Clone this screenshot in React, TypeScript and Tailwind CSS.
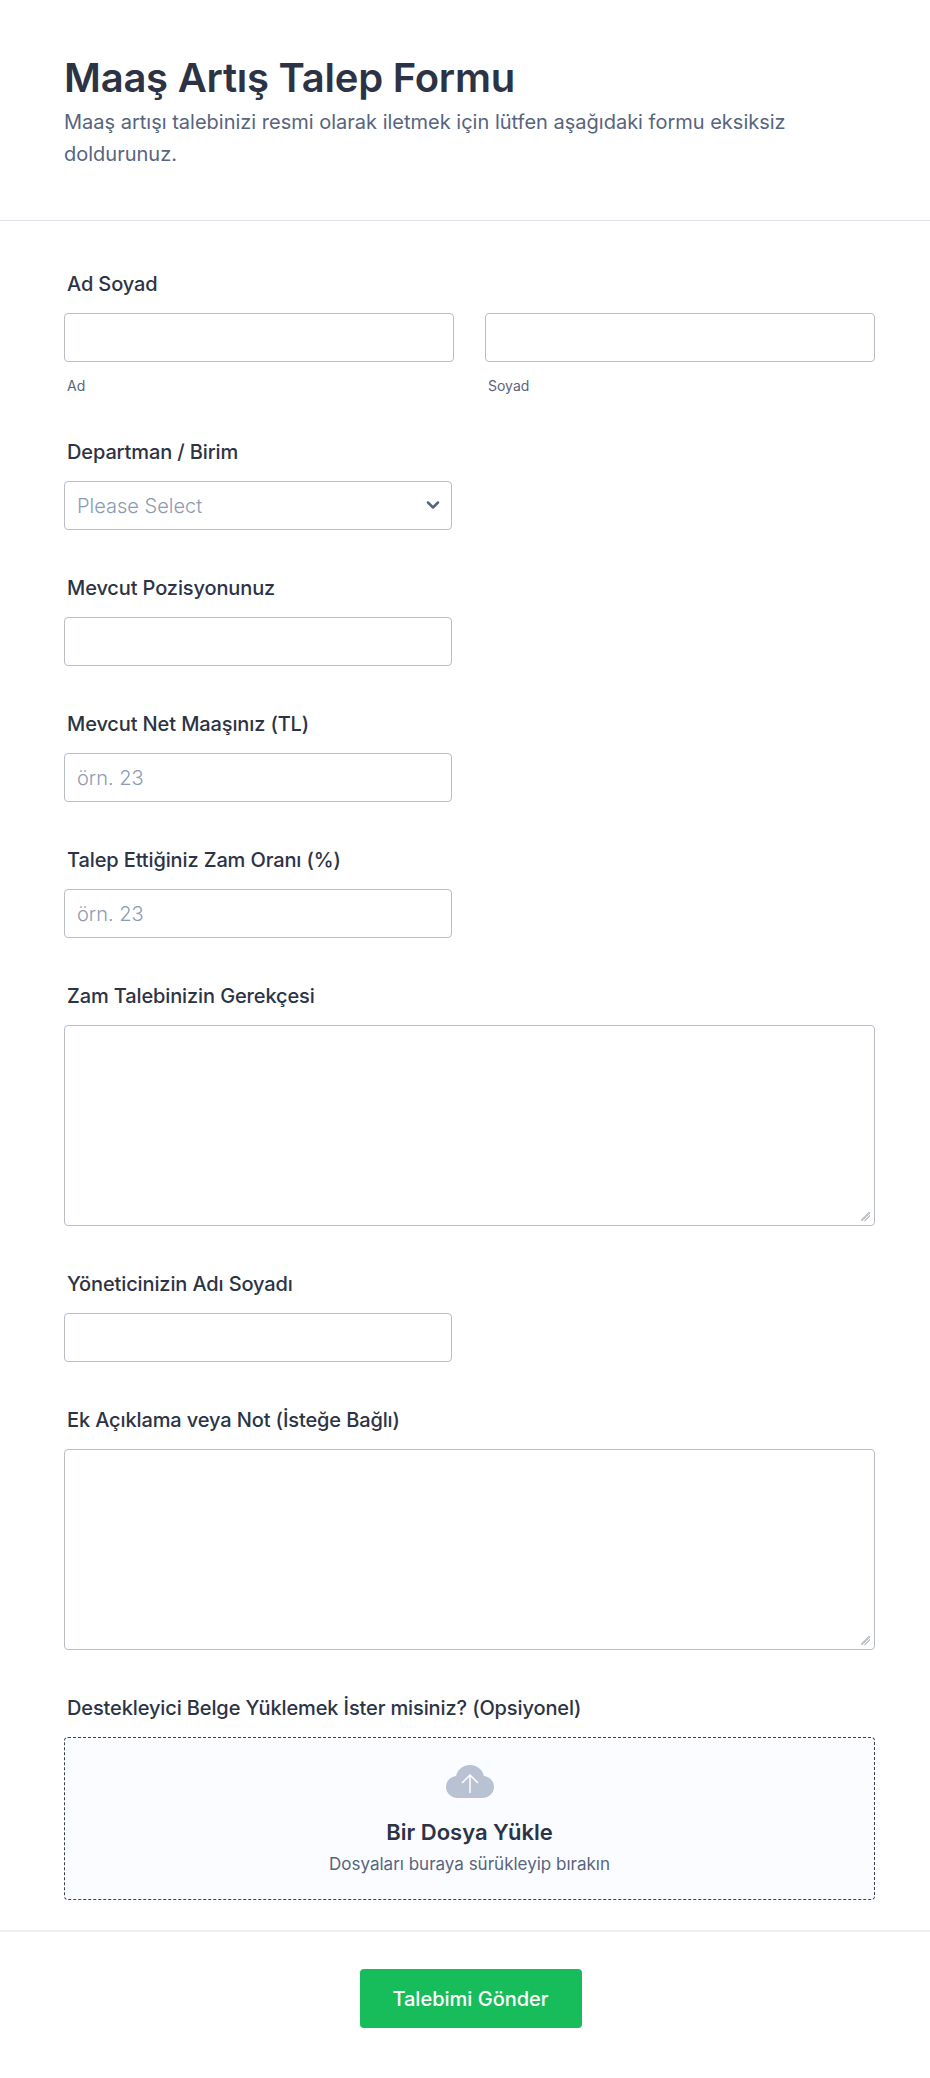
import React from 'react';
import { ChevronDown } from 'lucide-react';

const inputClass =
  'block h-[49px] w-full rounded-[4px] border border-[#b8bdc9] bg-white px-[12px] text-[20px] font-light text-[#2c3345] outline-none placeholder:text-[#8b9bb4]';

// the reference has a small pale grip, inset from the corner
const textareaClass =
  'block h-[201px] w-full rounded-[4px] border border-[#b8bdc9] bg-white px-[12px] py-[8px] text-[20px] outline-none [&::-webkit-resizer]:bg-[linear-gradient(135deg,transparent_44%,#c4c6cd_44%,#c4c6cd_56%,transparent_56%,transparent_64%,#c4c6cd_64%,#c4c6cd_76%,transparent_76%)] [&::-webkit-resizer]:bg-[length:9px_9px] [&::-webkit-resizer]:bg-[position:2px_2px] [&::-webkit-resizer]:bg-no-repeat';

const Field: React.FC<{ label: string; children: React.ReactNode }> = ({ label, children }) => (
  <div>
    <label className="mb-[15px] block px-[3px] text-[20px] leading-[28px] font-medium tracking-[-0.12px] text-[#2c3345]">
      {label}
    </label>
    {children}
  </div>
);

const ShortInput: React.FC<{ placeholder?: string }> = ({ placeholder }) => (
  <div className="w-[388px]">
    <input type="text" placeholder={placeholder} className={inputClass} />
  </div>
);

const UploadCloud = () => (
  <svg width="48" height="33" viewBox="0 0 48 33" className="block">
    <path
      d="M12 33C5 33 0 28 0 22C0 16 4 12 10 11C12 4 17 0 24 0C31 0 36 4 38 11C44 12 48 16 48 22C48 28 43 33 36 33Z"
      fill="#b8c2d3"
    />
    <path d="M24 28V11M16 18L24 10L32 18" fill="none" stroke="#ffffff" strokeWidth="1.5" />
  </svg>
);

export default function App() {
  return (
    <div className="min-h-[2078px] bg-white font-['Inter',sans-serif] text-[#2c3345]">
      <header className="border-b border-[#dfe1e8] px-[64px] pt-[54px] pb-[50px]">
        <h1 className="text-[40px] leading-[48px] font-semibold tracking-[-0.24px]">Maaş Artış Talep Formu</h1>
        <p className="mt-[4px] text-[20px] leading-[32px] text-[#57647e]">
          Maaş artışı talebinizi resmi olarak iletmek için lütfen aşağıdaki formu eksiksiz doldurunuz.
        </p>
      </header>

      <main className="flex flex-col gap-[44px] pt-[49px] pr-[55px] pb-[30px] pl-[64px]">
        <Field label="Ad Soyad">
          <div className="grid grid-cols-2 gap-[31px]">
            <div>
              <input type="text" className={inputClass} />
              <span className="mt-[16px] block px-[3px] text-[14px] leading-[16px] text-[#57647e]">Ad</span>
            </div>
            <div>
              <input type="text" className={inputClass} />
              <span className="mt-[16px] block px-[3px] text-[14px] leading-[16px] text-[#57647e]">Soyad</span>
            </div>
          </div>
        </Field>

        <Field label="Departman / Birim">
          <div className="relative w-[388px]">
            <select defaultValue="" className={`${inputClass} appearance-none text-[#8b9bb4]`}>
              <option value="">Please Select</option>
            </select>
            <ChevronDown
              size={20}
              strokeWidth={3}
              className="pointer-events-none absolute top-[14px] right-[9px] text-[#57647e]"
            />
          </div>
        </Field>

        <Field label="Mevcut Pozisyonunuz">
          <ShortInput />
        </Field>

        <Field label="Mevcut Net Maaşınız (TL)">
          <ShortInput placeholder="örn. 23" />
        </Field>

        <Field label="Talep Ettiğiniz Zam Oranı (%)">
          <ShortInput placeholder="örn. 23" />
        </Field>

        <Field label="Zam Talebinizin Gerekçesi">
          <textarea className={textareaClass} />
        </Field>

        <Field label="Yöneticinizin Adı Soyadı">
          <ShortInput />
        </Field>

        <Field label="Ek Açıklama veya Not (İsteğe Bağlı)">
          <textarea className={textareaClass} />
        </Field>

        <Field label="Destekleyici Belge Yüklemek İster misiniz? (Opsiyonel)">
          <div className="flex h-[163px] flex-col items-center rounded-[4px] border border-dashed border-[#3b4256] bg-[#fbfcff] pt-[27px]">
            <UploadCloud />
            <div className="mt-[20px] text-[22px] leading-[28px] font-semibold">Bir Dosya Yükle</div>
            <div className="mt-[6px] text-[17px] leading-[24px] text-[#57647e]">Dosyaları buraya sürükleyip bırakın</div>
          </div>
        </Field>
      </main>

      <footer className="flex justify-center border-t-2 border-[#eceef3] pt-[37px] pb-[49px] pl-[11px]">
        <button className="h-[59px] w-[222px] rounded-[4px] bg-[#18bd5b] text-[20px] font-medium text-white">
          Talebimi Gönder
        </button>
      </footer>
    </div>
  );
}
